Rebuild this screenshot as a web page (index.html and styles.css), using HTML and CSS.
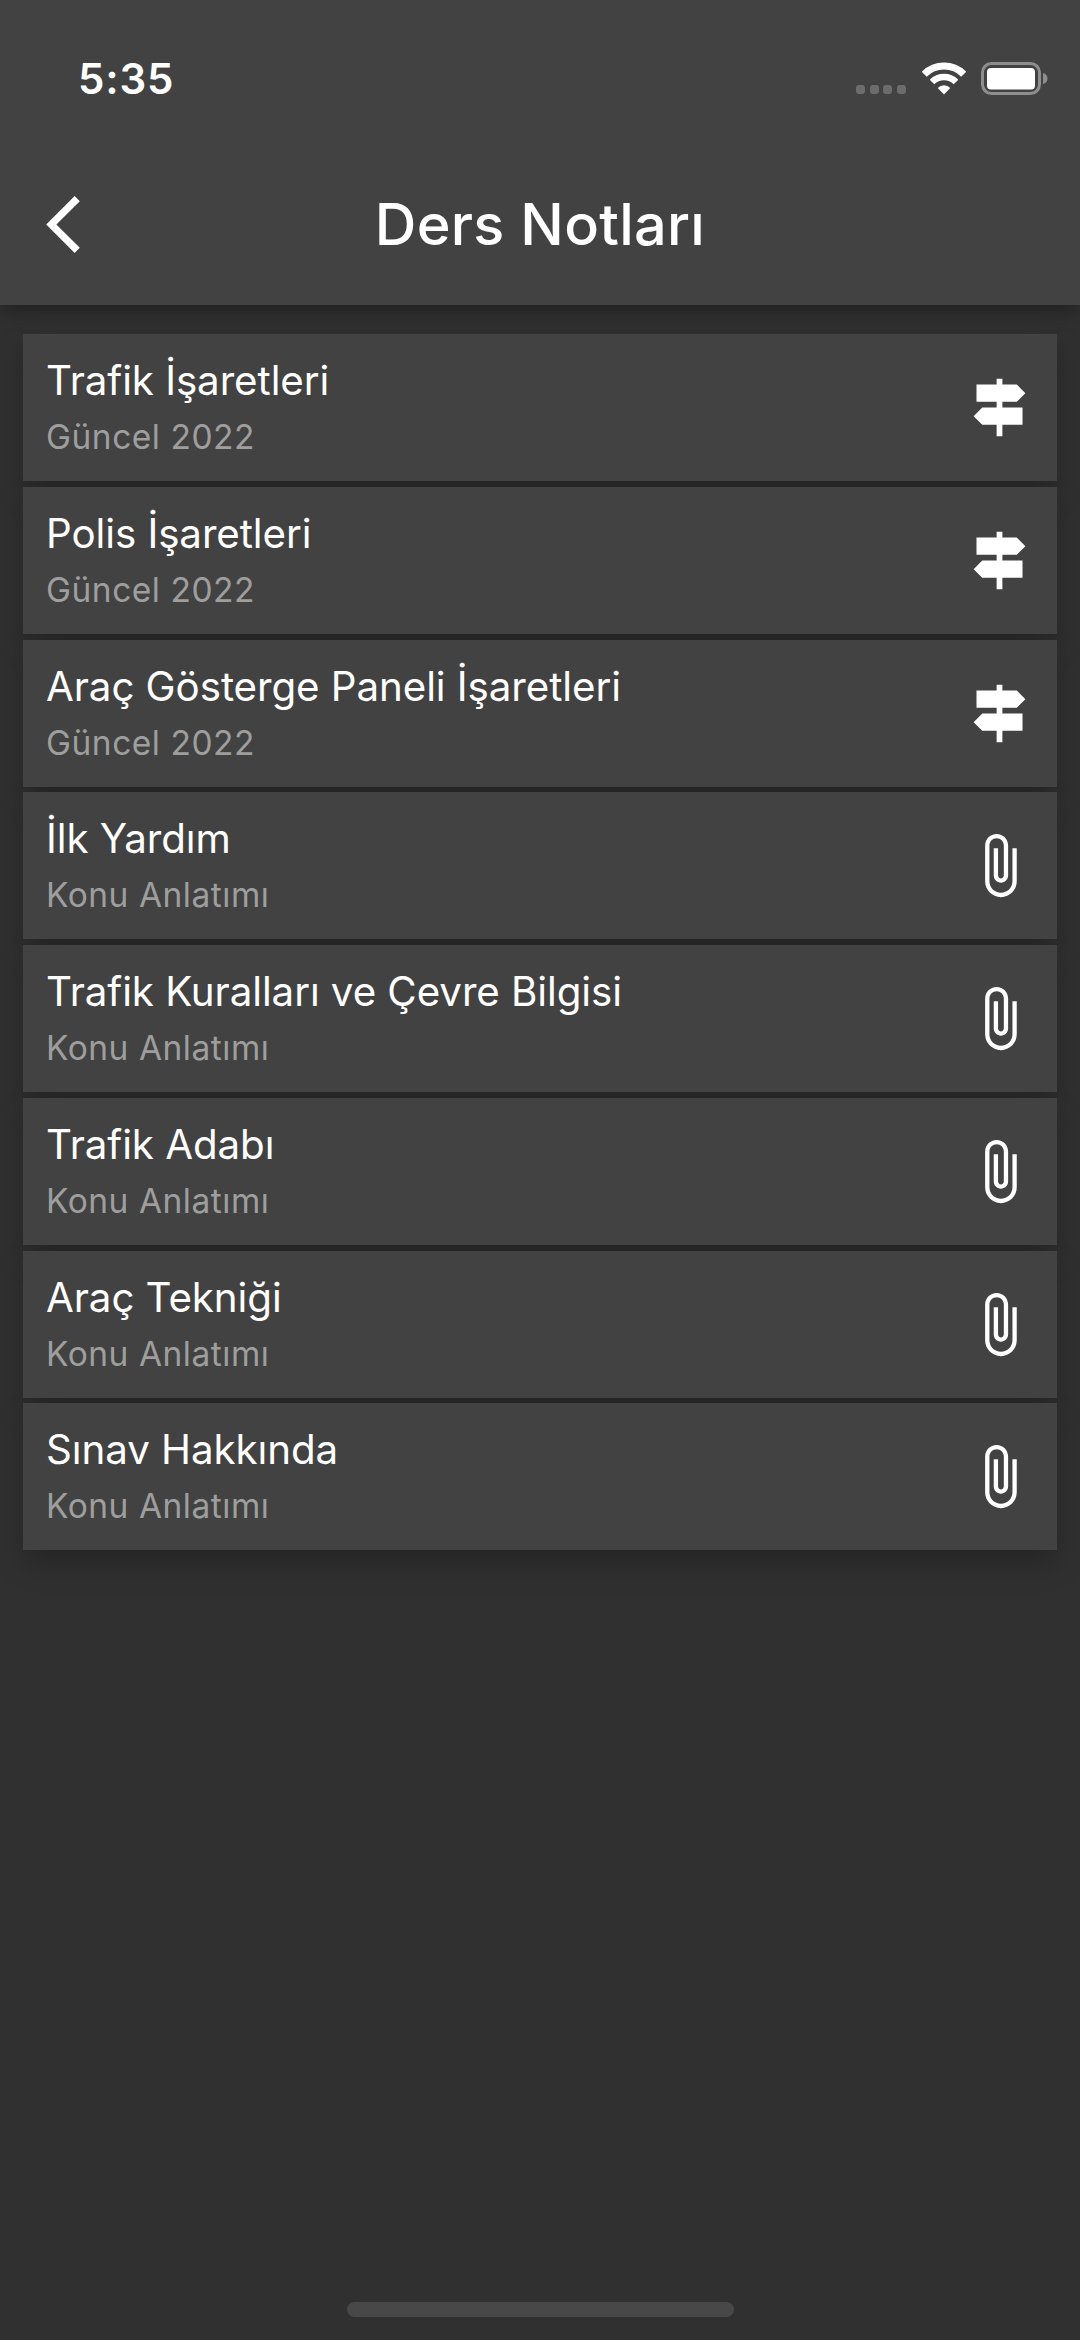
FILE: index.html
```html
<!DOCTYPE html>
<html lang="tr">
<head>
<meta charset="utf-8">
<title>Ders Notları</title>
<link rel="stylesheet" href="styles.css">
</head>
<body>
<svg class="defs" width="0" height="0" aria-hidden="true">
  <symbol id="signpost" viewBox="0 0 24 24"><path d="M13 10h5l3-3-3-3h-5V2h-2v2H4v6h7v2H6l-3 3 3 3h5v4h2v-4h7v-6h-7v-2z"/></symbol>
  <symbol id="clip" viewBox="0 0 24 24"><path d="M16.5 6v11.5c0 2.21-1.79 4-4 4s-4-1.79-4-4V5c0-1.38 1.12-2.5 2.5-2.5s2.5 1.12 2.5 2.5v10.5c0 .55-.45 1-1 1s-1-.45-1-1V6H10v9.5c0 1.38 1.12 2.5 2.5 2.5s2.5-1.12 2.5-2.5V5c0-2.21-1.79-4-4-4S7 2.79 7 5v12.5c0 3.04 2.46 5.5 5.5 5.5s5.5-2.46 5.5-5.5V6h-1.5z"/></symbol>
</svg>
<div class="screen">
  <header class="header">
    <div class="status">
      <span class="clock">5:35</span>
      <div class="indicators">
        <div class="dots"><i></i><i></i><i></i><i></i></div>
        <svg class="wifi" width="44" height="33" viewBox="0 0 44 33"><g fill="none" stroke="#fff"><path stroke-width="7" d="M2.3 12.2a28 28 0 0 1 39.4 0"/><path stroke-width="6.4" d="M10 20a17 17 0 0 1 24 0"/></g><path fill="#fff" d="M22 32.4l-6.3-6.5a9 9 0 0 1 12.6 0z"/></svg>
        <svg class="battery" width="67" height="33" viewBox="0 0 67 33"><rect x="1.5" y="1.5" width="57" height="30" rx="9" fill="none" stroke="#8e8e8e" stroke-width="3"/><rect x="6" y="6" width="48" height="21.500" rx="4" fill="#fff"/><path fill="#8e8e8e" d="M62 11c3 .8 4.500 3 4.500 5.500s-1.500 4.700-4.500 5.500z"/></svg>
      </div>
    </div>
    <div class="toolbar">
      <svg class="back" viewBox="0 0 11.670 24"><path fill="#fff" d="M11.670 3.870L9.900 2.100 0 12l9.900 9.900 1.770-1.770L3.540 12z"/></svg>
      <h1 class="heading">Ders Notları</h1>
    </div>
  </header>
  <main class="list">
    <div class="card"><div class="text"><div class="title">Trafik İşaretleri</div><div class="sub">Güncel 2022</div></div><svg class="icon"><use href="#signpost"/></svg></div>
    <div class="card"><div class="text"><div class="title">Polis İşaretleri</div><div class="sub">Güncel 2022</div></div><svg class="icon"><use href="#signpost"/></svg></div>
    <div class="card"><div class="text"><div class="title">Araç Gösterge Paneli İşaretleri</div><div class="sub">Güncel 2022</div></div><svg class="icon"><use href="#signpost"/></svg></div>
    <div class="card"><div class="text"><div class="title">İlk Yardım</div><div class="sub">Konu Anlatımı</div></div><svg class="icon"><use href="#clip"/></svg></div>
    <div class="card"><div class="text"><div class="title">Trafik Kuralları ve Çevre Bilgisi</div><div class="sub">Konu Anlatımı</div></div><svg class="icon"><use href="#clip"/></svg></div>
    <div class="card"><div class="text"><div class="title">Trafik Adabı</div><div class="sub">Konu Anlatımı</div></div><svg class="icon"><use href="#clip"/></svg></div>
    <div class="card"><div class="text"><div class="title">Araç Tekniği</div><div class="sub">Konu Anlatımı</div></div><svg class="icon"><use href="#clip"/></svg></div>
    <div class="card"><div class="text"><div class="title">Sınav Hakkında</div><div class="sub">Konu Anlatımı</div></div><svg class="icon"><use href="#clip"/></svg></div>
  </main>
  <div class="home"></div>
</div>
</body>
</html>
```
FILE: styles.css
```css
* { box-sizing: border-box; }
body {
  margin: 0;
  background: #303030;
  color: #fff;
  font-family: Inter, "Liberation Sans", sans-serif;
}
.defs { position: absolute; }
.screen {
  width: 1080px;
  height: 2340px;
  display: flex;
  flex-direction: column;
  overflow: hidden;
}
.header {
  flex: none;
  height: 305px;
  background: #424242;
  box-shadow: 0 9px 14px -4px rgba(0, 0, 0, .2), 0 5px 22px rgba(0, 0, 0, .14);
}
.status {
  height: 144px;
  padding: 54px 32.500px 0 78px;
  display: flex;
  justify-content: space-between;
  align-items: flex-start;
}
.clock {
  font-size: 42px;
  line-height: 50px;
  font-weight: 560;
  letter-spacing: .8px;
}
.indicators {
  display: flex;
  align-items: flex-end;
  padding-top: 8px;
}
.dots { display: flex; gap: 4.500px; margin-right: 16px; padding-bottom: 1px; }
.dots i { width: 9px; height: 9px; border-radius: 3px; background: #6c6c6c; }
.wifi { margin-right: 15px; }
.toolbar {
  height: 161px;
  padding: 0 46px;
  display: grid;
  grid-template-columns: 34px 1fr 34px;
  align-items: center;
}
.back { width: 34px; height: 69px; }
.heading {
  margin: 0 0 2px;
  text-align: center;
  font-size: 57.600px;
  line-height: 70px;
  font-weight: 500;
  letter-spacing: .3px;
}
.list {
  padding: 29px 23px 0;
  display: flex;
  flex-direction: column;
  gap: 5.750px;
  position: relative;
  z-index: 0;
}
.card {
  flex: none;
  height: 147px;
  padding: 0 23px;
  display: flex;
  justify-content: space-between;
  align-items: center;
  background: #424242;
  position: relative;
}
.card::before {
  content: "";
  position: absolute;
  inset: 0;
  z-index: -1;
  box-shadow: 0 14px 28px -2px rgba(0, 0, 0, .25);
}
.text { align-self: flex-start; padding-top: 23px; }
.title { font-size: 40.300px; line-height: 48px; letter-spacing: -.07px; }
.sub {
  margin-top: 12px;
  font-size: 33.500px;
  line-height: 40px;
  letter-spacing: .52px;
  color: #9e9e9e;
}
.icon { width: 69px; height: 69px; fill: #fff; }
.home {
  flex: none;
  width: 387px;
  height: 15px;
  margin: auto auto 23px 347px;
  border-radius: 8px;
  background: #484848;
}
```
